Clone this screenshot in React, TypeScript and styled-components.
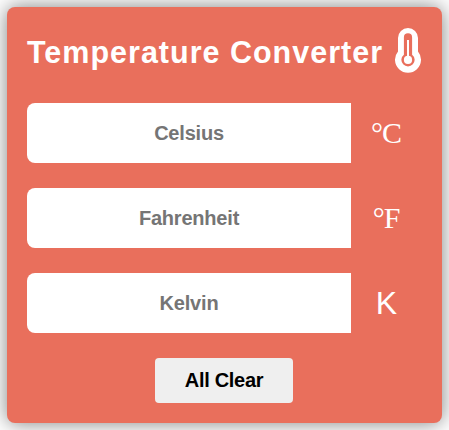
import React from "react";
import styled, { createGlobalStyle } from "styled-components";

const GlobalStyle = createGlobalStyle`
  * { box-sizing: border-box; margin: 0; padding: 0; }
  body { background: #fff; font-family: "Liberation Sans", Arial, sans-serif; overflow: hidden; }
`;
const Page = styled.div`
  padding: 7px;
`;
const Card = styled.main`
  width: 435px;
  height: 416px;
  padding: 21px 20px 0;
  border-radius: 8px;
  background: #e96f5c;
  color: #fff;
  box-shadow: 0 0 20px rgba(0, 0, 0, 0.5);
  display: flex;
  flex-direction: column;
`;
const Header = styled.header`
  display: flex;
  align-items: flex-start;
  justify-content: space-between;
  height: 50px;
  margin-bottom: 25px;
  padding-right: 1px;
`;
const Title = styled.h1`
  font-size: 30.5px;
  line-height: 49px;
  letter-spacing: 1px;
  white-space: nowrap;
`;
const Icon = styled.svg`
  display: block;
  width: 26px;
  height: 45px;
`;
const Row = styled.label`
  display: flex;
  height: 60px;
  margin-bottom: 25px;
`;
const Field = styled.input`
  width: 324px;
  height: 60px;
  border: 0;
  outline: 0;
  border-radius: 8px 0 0 8px;
  background: #fff;
  text-align: center;
  font: bold 20px "Liberation Sans", Arial, sans-serif;
  letter-spacing: -0.2px;
  &::placeholder { color: #757575; opacity: 1; }
`;
const Unit = styled.span<{ $serif?: boolean }>`
  width: 71px;
  text-align: center;
  line-height: 60px;
  font-size: ${(p) => (p.$serif ? "30px" : "32px")};
  font-family: ${(p) => (p.$serif ? '"Liberation Serif", serif' : '"Liberation Sans", sans-serif')};
`;
const Degree = styled.span`
  margin-right: -1px;
`;
const ClearButton = styled.button`
  align-self: center;
  width: 138px;
  height: 45px;
  margin-right: 1px;
  border: 0;
  border-radius: 4px;
  background: #efefef;
  color: #000;
  font: bold 20px "Liberation Sans", Arial, sans-serif;
  letter-spacing: -0.3px;
`;
const fields = [
  { name: "Celsius", unit: "C", degree: true },
  { name: "Fahrenheit", unit: "F", degree: true },
  { name: "Kelvin", unit: "K", degree: false },
];

function Thermometer() {
  return (
    <Icon viewBox="0 0 26 45" fill="#fff" aria-hidden="true">
      <path
        fillRule="evenodd"
        d="M13 0a10 10 0 0 1 10 10v13.5a13 13 0 1 1-20 0V10A10 10 0 0 1 13 0Zm0 5.3a4.1 4.1 0 0 0-4.1 4.1v17.3a6.6 6.6 0 1 0 8.2 0V9.4A4.1 4.1 0 0 0 13 5.3Z"
      />
      <rect x="12" y="12" width="2" height="18" />
      <circle cx="13" cy="31.9" r="4.1" />
    </Icon>
  );
}

export default function App() {
  return (
    <>
      <GlobalStyle />
      <Page>
        <Card>
          <Header>
            <Title>Temperature Converter</Title>
            <Thermometer />
          </Header>
          {fields.map((f) => (
            <Row key={f.name}>
              <Field placeholder={f.name} />
              <Unit $serif={f.degree}>
                {f.degree && <Degree>°</Degree>}
                {f.unit}
              </Unit>
            </Row>
          ))}
          <ClearButton>All Clear</ClearButton>
        </Card>
      </Page>
    </>
  );
}
